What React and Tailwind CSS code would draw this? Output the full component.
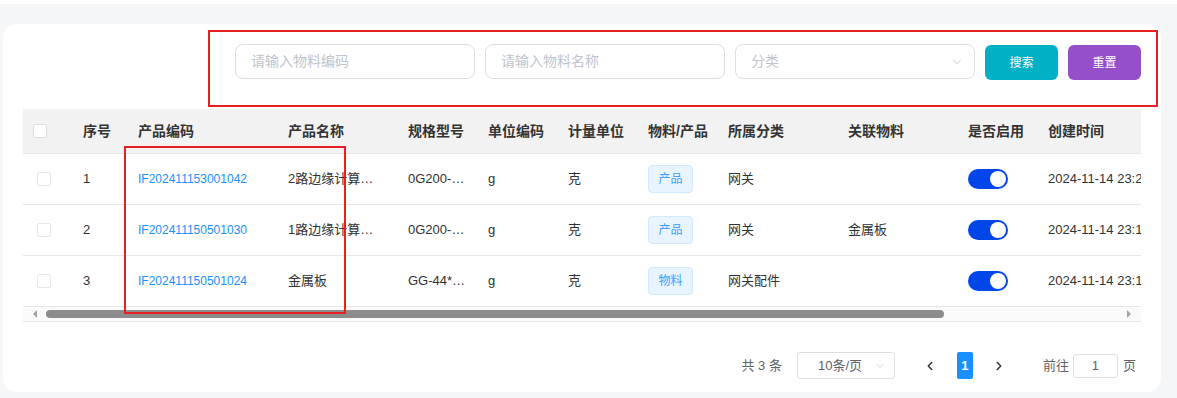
import { ChevronDown, ChevronLeft, ChevronRight } from 'lucide-react'

const columns = [
  { key: 'check', label: '', w: 'w-[48px]' },
  { key: 'idx', label: '序号', w: 'w-[55px]' },
  { key: 'code', label: '产品编码', w: 'w-[150px]' },
  { key: 'name', label: '产品名称', w: 'w-[120px]' },
  { key: 'spec', label: '规格型号', w: 'w-[80px]' },
  { key: 'unitCode', label: '单位编码', w: 'w-[80px]' },
  { key: 'unit', label: '计量单位', w: 'w-[80px]' },
  { key: 'type', label: '物料/产品', w: 'w-[80px]' },
  { key: 'cat', label: '所属分类', w: 'w-[120px]' },
  { key: 'rel', label: '关联物料', w: 'w-[120px]' },
  { key: 'on', label: '是否启用', w: 'w-[80px]' },
  { key: 'time', label: '创建时间', w: 'w-[170px]' },
  { key: 'op', label: '操作', w: 'w-[160px]' },
]

const rows = [
  { idx: 1, code: 'IF202411153001042', name: '2路边缘计算机网关', spec: '0G200-2LAN-4G', unitCode: 'g', unit: '克', type: '产品', cat: '网关', rel: '', time: '2024-11-14 23:26:11' },
  { idx: 2, code: 'IF202411150501030', name: '1路边缘计算机网关', spec: '0G200-1LAN-4G', unitCode: 'g', unit: '克', type: '产品', cat: '网关', rel: '金属板', time: '2024-11-14 23:15:40' },
  { idx: 3, code: 'IF202411150501024', name: '金属板', spec: 'GG-44*44*10mm', unitCode: 'g', unit: '克', type: '物料', cat: '网关配件', rel: '', time: '2024-11-14 23:12:08' },
]

const Checkbox = ({ className = '' }) => (
  <div className={`w-[14px] h-[14px] rounded-[2px] border border-[#dcdfe6] bg-white ${className}`} />
)

const Switch = () => (
  <div className="w-[40px] h-[20px] rounded-full bg-[#0046e8] flex items-center justify-end pr-[2px]">
    <div className="w-[16px] h-[16px] rounded-full bg-white" />
  </div>
)

const SearchInput = ({ placeholder, select }) => (
  <div className="w-[240px] h-[35px] rounded-[8px] border border-[#dcdfe6] bg-white flex items-center pl-[15px] pr-[10px]">
    <span className="text-[14px] text-[#c0c4cc] flex-1">{placeholder}</span>
    {select && <ChevronDown size={14} strokeWidth={1.5} className="text-[#c0c4cc]" />}
  </div>
)

const App = () => {
  return (
    <div
      className="relative w-[1177px] h-[398px] overflow-hidden bg-[#f5f6f8] text-[#303133]"
      style={{ fontFamily: '"Liberation Sans", "Noto Sans CJK SC", sans-serif' }}
    >
      <div className="h-[4px] bg-white" />

      {/* Card */}
      <div className="ml-[3px] mt-[20px] w-[1158px] h-[368px] rounded-[14px] bg-white pt-[20px] pl-[20px] pr-[20px]">
        {/* Search form */}
        <div className="flex justify-end gap-[10px]">
          <SearchInput placeholder="请输入物料编码" />
          <SearchInput placeholder="请输入物料名称" />
          <SearchInput placeholder="分类" select />
          <button className="w-[73px] h-[35px] mt-[1px] rounded-[6px] bg-[#00b0c4] text-white text-[12px]">搜索</button>
          <button className="w-[73px] h-[35px] mt-[1px] rounded-[6px] bg-[#954fc9] text-white text-[12px]">重置</button>
        </div>

        {/* Table */}
        <div className="mt-[29px] overflow-hidden">
          <div className="flex h-[45px] items-center bg-[#f2f2f2] border-b border-[#e4e7ed] w-max">
            {columns.map((c) => (
              <div key={c.key} className={`${c.w} shrink-0 px-[12px] text-[14px] font-bold text-[#333] whitespace-nowrap`}>
                {c.key === 'check' ? <Checkbox className="-ml-[2px]" /> : c.label}
              </div>
            ))}
          </div>
          {rows.map((r) => (
            <div key={r.idx} className="flex h-[51px] items-center border-b border-[#e4e7ed] w-max text-[13px] text-[#303133]">
              <div className="w-[48px] shrink-0 px-[12px]">
                <Checkbox className="ml-[2px] border-[#e4e7ed]" />
              </div>
              <div className="w-[55px] shrink-0 px-[12px]">{r.idx}</div>
              <div className="w-[150px] shrink-0 px-[12px] text-[12px] text-[#1890ff]">{r.code}</div>
              <div className="w-[120px] shrink-0 px-[12px] truncate">{r.name}</div>
              <div className="w-[80px] shrink-0 pl-[12px] pr-[8px] truncate">{r.spec}</div>
              <div className="w-[80px] shrink-0 px-[12px]">{r.unitCode}</div>
              <div className="w-[80px] shrink-0 px-[12px]">{r.unit}</div>
              <div className="w-[80px] shrink-0 px-[12px]">
                <span className="inline-flex items-center justify-center w-[45px] h-[28px] rounded-[4px] border border-[#d1e9ff] bg-[#e8f4ff] text-[12px] text-[#409eff]">
                  {r.type}
                </span>
              </div>
              <div className="w-[120px] shrink-0 px-[12px]">{r.cat}</div>
              <div className="w-[120px] shrink-0 px-[12px]">{r.rel}</div>
              <div className="w-[80px] shrink-0 px-[12px]">
                <Switch />
              </div>
              <div className="w-[170px] shrink-0 px-[12px] whitespace-nowrap">{r.time}</div>
              <div className="w-[160px] shrink-0 px-[12px]" />
            </div>
          ))}

          {/* Horizontal scrollbar */}
          <div className="flex h-[15px] items-center bg-[#fafafa] border-b border-[#e4e7ed]">
            <div className="ml-[10px] w-0 h-0 border-y-[4px] border-y-transparent border-r-[4px] border-r-[#a3a3a3]" />
            <div className="ml-[9px] w-[898px] h-[8px] rounded-full bg-[#8c8c8c]" />
            <div className="ml-auto mr-[10px] w-0 h-0 border-y-[4px] border-y-transparent border-l-[4px] border-l-[#a3a3a3]" />
          </div>
        </div>

        {/* Pagination */}
        <div className="mt-[30px] flex items-center justify-end pr-[5px] text-[13px] text-[#606266]">
          <span>共 3 条</span>
          <div className="ml-[15px] w-[98px] h-[27px] rounded-[3px] border border-[#dcdfe6] flex items-center pl-[20px] pr-[8px]">
            <span className="flex-1 text-[#606266]">10条/页</span>
            <ChevronDown size={12} strokeWidth={1.5} className="text-[#c0c4cc]" />
          </div>
          <div className="ml-[20px] w-[30px] flex justify-center">
            <ChevronLeft size={14} strokeWidth={2.5} className="text-[#303133]" />
          </div>
          <div className="ml-[12px] w-[16px] h-[27px] rounded-[2px] bg-[#1890ff] text-white font-bold flex items-center justify-center text-[13px]">
            1
          </div>
          <div className="ml-[11px] w-[30px] flex justify-center">
            <ChevronRight size={14} strokeWidth={2.5} className="text-[#303133]" />
          </div>
          <span className="ml-[29px]">前往</span>
          <div className="ml-[4px] w-[45px] h-[24px] rounded-[3px] border border-[#dcdfe6] flex items-center justify-center text-[#606266]">
            1
          </div>
          <span className="ml-[5px]">页</span>
        </div>
      </div>

      {/* Annotation boxes */}
      <div className="absolute left-[208px] top-[30px] w-[950px] h-[77px] border-2 border-[#e81e25] pointer-events-none" />
      <div className="absolute left-[124px] top-[146px] w-[222px] h-[168px] border-2 border-[#e81e25] pointer-events-none" />
    </div>
  )
}

export default App
